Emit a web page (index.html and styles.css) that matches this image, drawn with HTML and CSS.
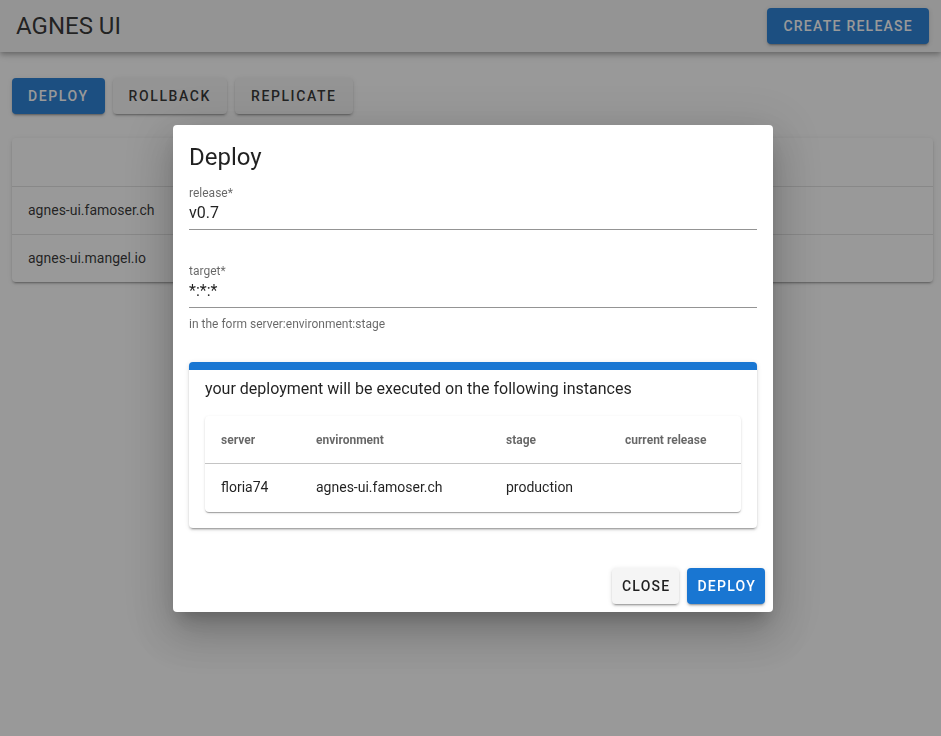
FILE: index.html
```html
<!DOCTYPE html>
<html lang="en">
<head>
<meta charset="utf-8">
<title>AGNES UI</title>
<link rel="stylesheet" href="styles.css">
</head>
<body>
<div class="app">
  <header class="app-bar">
    <div class="app-title">AGNES UI</div>
    <button class="btn btn-primary btn-bar">Create release</button>
  </header>
  <main class="page">
    <div class="actions-row">
      <button class="btn btn-primary">Deploy</button>
      <button class="btn btn-default">Rollback</button>
      <button class="btn btn-default">Replicate</button>
    </div>
    <div class="card main-table">
      <div class="main-row main-head"></div>
      <div class="main-row">agnes-ui.famoser.ch</div>
      <div class="main-row">agnes-ui.mangel.io</div>
    </div>
  </main>
</div>

<div class="overlay"></div>
<div class="dialog-wrap">
  <div class="dialog">
    <div class="dialog-title">Deploy</div>
    <div class="dialog-body">
      <div class="field">
        <div class="field-label">release*</div>
        <div class="field-input">v0.7</div>
      </div>
      <div class="field field-second">
        <div class="field-label">target*</div>
        <div class="field-input">*:*:*</div>
      </div>
      <div class="field-hint">in the form server:environment:stage</div>

      <div class="info-card">
        <div class="info-title">your deployment will be executed on the following instances</div>
        <div class="inst-table">
          <table>
            <thead>
              <tr>
                <th class="c-server">server</th>
                <th class="c-env">environment</th>
                <th class="c-stage">stage</th>
                <th class="c-rel">current release</th>
              </tr>
            </thead>
            <tbody>
              <tr>
                <td>floria74</td>
                <td>agnes-ui.famoser.ch</td>
                <td>production</td>
                <td></td>
              </tr>
            </tbody>
          </table>
        </div>
      </div>
    </div>
    <div class="dialog-actions">
      <button class="btn btn-default btn-small">Close</button>
      <button class="btn btn-primary btn-small">Deploy</button>
    </div>
  </div>
</div>
</body>
</html>
```

FILE: styles.css
```css
* { box-sizing: border-box; }

html, body {
  margin: 0;
  padding: 0;
  height: 100%;
}

body {
  font-family: Roboto, "Liberation Sans", Arial, sans-serif;
  background: #ffffff;
  color: rgba(0, 0, 0, 0.87);
  overflow: hidden;
}

.app-bar {
  height: 52px;
  background: #f5f5f5;
  display: flex;
  align-items: center;
  justify-content: space-between;
  padding: 0 12px 0 16px;
  box-shadow: 0 2px 4px -1px rgba(0,0,0,.2), 0 4px 5px 0 rgba(0,0,0,.14), 0 1px 10px 0 rgba(0,0,0,.12);
  position: relative;
  z-index: 1;
}

.app-title {
  font-size: 24px;
  line-height: 32px;
  font-weight: 400;
  color: rgba(0, 0, 0, 0.87);
}

.btn {
  font-family: Roboto, "Liberation Sans", Arial, sans-serif;
  height: 36px;
  padding: 0 16px;
  border: 0;
  border-radius: 4px;
  font-size: 14px;
  font-weight: 500;
  letter-spacing: 1.6px;
  text-transform: uppercase;
  box-shadow: 0 3px 1px -2px rgba(0,0,0,.2), 0 2px 2px 0 rgba(0,0,0,.14), 0 1px 5px 0 rgba(0,0,0,.12);
  cursor: pointer;
}

.btn-bar {
  letter-spacing: 1.25px;
}

.btn-primary {
  background: #1976d2;
  color: #ffffff;
}

.btn-default {
  background: #f5f5f5;
  color: rgba(0, 0, 0, 0.87);
}

.btn-small {
  padding: 0 9px 0 10px;
  letter-spacing: 1.25px;
}

.page {
  padding: 26px 8px 0 12px;
}

.actions-row {
  display: flex;
  gap: 8px;
}

.card {
  background: #ffffff;
  border-radius: 4px;
  box-shadow: 0 3px 1px -2px rgba(0,0,0,.2), 0 2px 2px 0 rgba(0,0,0,.14), 0 1px 5px 0 rgba(0,0,0,.12);
}

.main-table {
  margin-top: 24px;
}

.main-row {
  height: 48px;
  line-height: 46px;
  padding: 0 16px;
  font-size: 14px;
  color: rgba(0, 0, 0, 0.87);
  border-top: 1px solid rgba(0, 0, 0, 0.12);
}

.main-row.main-head {
  border-top: 0;
}

.overlay {
  position: fixed;
  inset: 0;
  background: rgba(33, 33, 33, 0.46);
  z-index: 5;
}

.dialog-wrap {
  position: fixed;
  inset: 0;
  z-index: 6;
  display: flex;
  align-items: center;
  justify-content: center;
  padding-left: 5px;
}

.dialog {
  width: 600px;
  background: #ffffff;
  border-radius: 4px;
  box-shadow: 0 11px 15px -7px rgba(0,0,0,.2), 0 24px 38px 3px rgba(0,0,0,.14), 0 9px 46px 8px rgba(0,0,0,.12);
}

.dialog-title {
  padding: 16px 16px 0 16px;
  font-size: 24px;
  line-height: 32px;
  font-weight: 400;
  color: rgba(0, 0, 0, 0.87);
}

.dialog-body {
  padding: 0 16px 32px 16px;
}

.field {
  padding-top: 12px;
  border-bottom: 1px solid rgba(0, 0, 0, 0.42);
  padding-bottom: 4px;
}

.field-second {
  margin-top: 32px;
  padding-top: 1px;
}

.field-label {
  font-size: 12px;
  line-height: 16px;
  color: rgba(0, 0, 0, 0.6);
}

.field-input {
  font-size: 16px;
  line-height: 24px;
  color: rgba(0, 0, 0, 0.87);
}

.field-hint {
  margin-top: 8px;
  font-size: 12px;
  line-height: 16px;
  color: rgba(0, 0, 0, 0.6);
}

.info-card {
  margin-top: 30px;
  background: #ffffff;
  border-radius: 4px;
  border-top: 8px solid #1976d2;
  padding: 6px 16px 16px 16px;
  box-shadow: 0 3px 1px -2px rgba(0,0,0,.2), 0 2px 2px 0 rgba(0,0,0,.14), 0 1px 5px 0 rgba(0,0,0,.12);
}

.info-title {
  font-size: 16px;
  line-height: 24px;
  padding-top: 1px;
  height: 24px;
  color: rgba(0, 0, 0, 0.87);
}

.inst-table {
  margin-top: 16px;
  background: #ffffff;
  border-radius: 4px;
  box-shadow: 0 2px 1px -1px rgba(0,0,0,.2), 0 1px 1px 0 rgba(0,0,0,.14), 0 1px 3px 0 rgba(0,0,0,.12);
}

.inst-table table {
  width: 100%;
  border-collapse: collapse;
  table-layout: fixed;
}

.inst-table th,
.inst-table td {
  height: 48px;
  padding: 0 16px;
  text-align: left;
  white-space: nowrap;
}

.inst-table th {
  font-size: 12px;
  font-weight: 700;
  padding-top: 2px;
  color: rgba(0, 0, 0, 0.6);
  border-bottom: 1px solid rgba(0, 0, 0, 0.12);
}

.inst-table td {
  font-size: 14px;
  padding-bottom: 1px;
  color: rgba(0, 0, 0, 0.87);
}

.c-server { width: 95px; }
.c-env { width: 190px; }
.c-stage { width: 119px; }
.c-rel { width: auto; }

.dialog-actions {
  display: flex;
  justify-content: flex-end;
  gap: 8px;
  padding: 8px;
}
```
